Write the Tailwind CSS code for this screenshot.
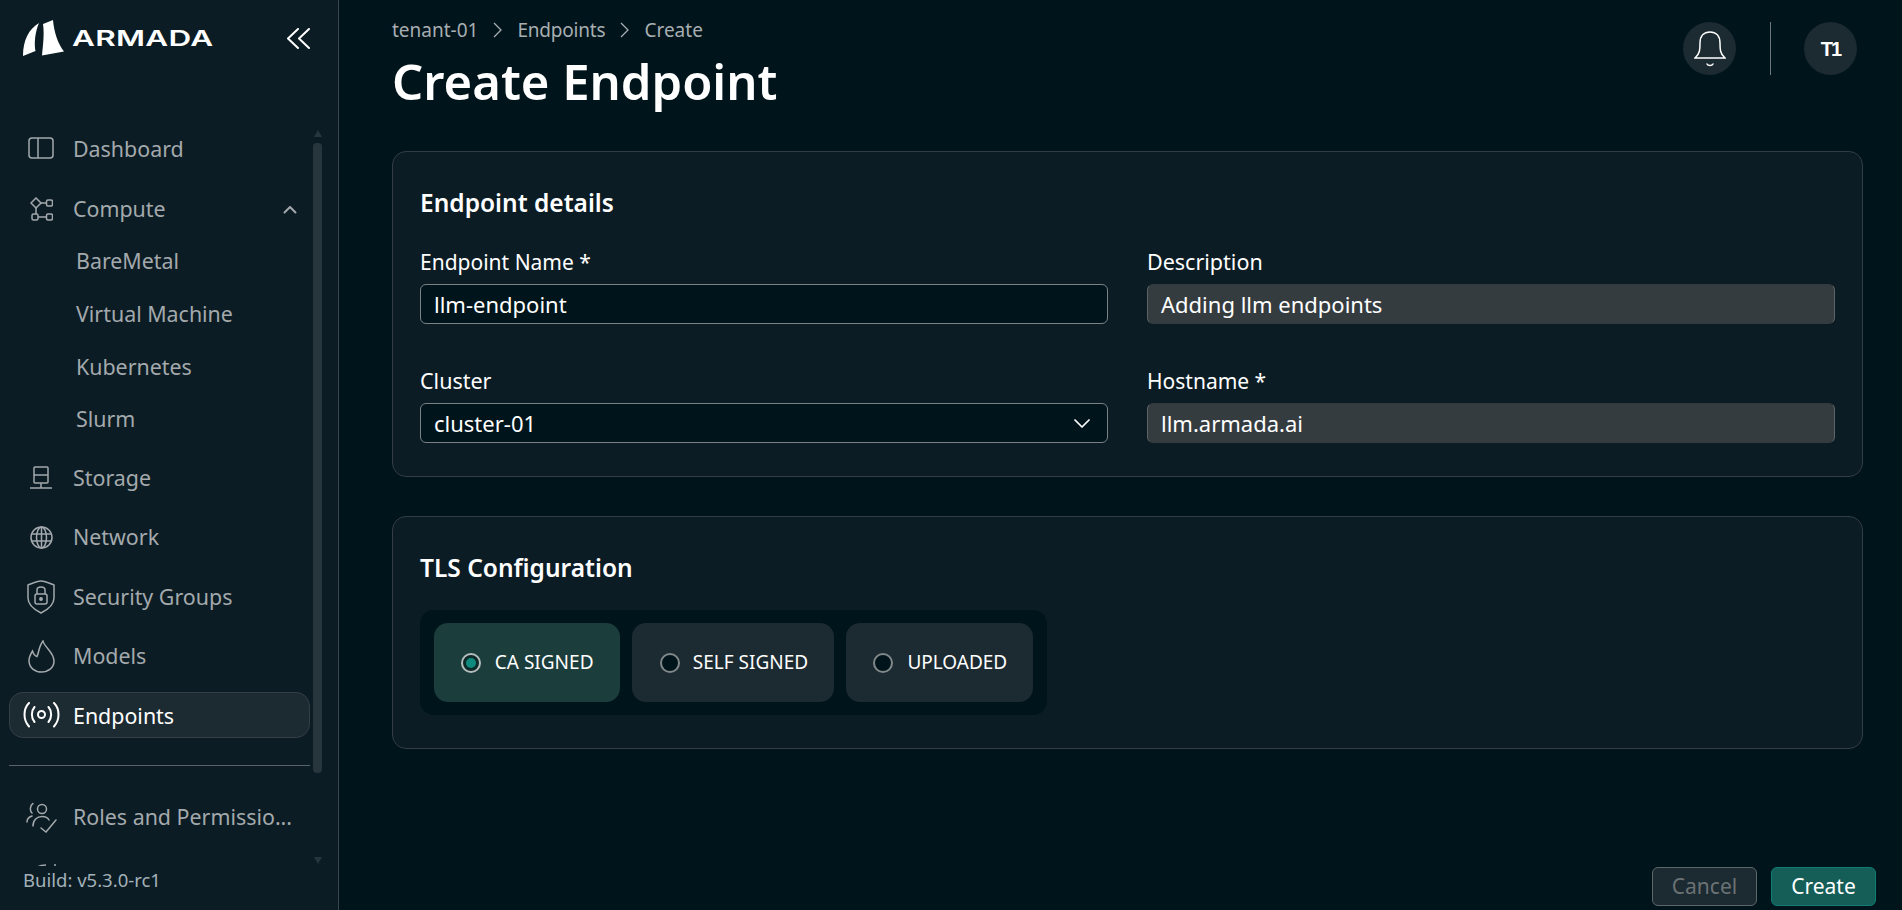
<!DOCTYPE html>
<html lang="en">
<head>
<meta charset="utf-8">
<title>Create Endpoint</title>
<script src="https://cdn.jsdelivr.net/npm/@tailwindcss/browser@4"></script>
</head>
<body class="bg-[#00141b]">
<div class="flex h-[910px] w-[1902px] overflow-hidden bg-[#00141b] font-['Noto_Sans',sans-serif] text-white">

  <!-- Sidebar -->
  <aside class="relative flex h-full w-[339px] shrink-0 flex-col border-r border-[#3a454b] bg-[#0b1c24]">
    <div class="flex h-[118px] shrink-0 items-start pl-[23px] pr-[28px] pt-[20px]">
      <svg class="shrink-0" width="42" height="36" viewBox="0 0 42 36" fill="#fff">
        <path d="M0 36C0 20 6 9 16 3C12 12 11 24 12.500 31Z"/>
        <path d="M20 4L30 0C31 12 35 24 41 31.500L19 35.500C20 25 21.500 14 20 4Z"/>
      </svg>
      <span class="ml-[7px] mt-[3px] origin-left scale-x-[1.43] font-['Inter',sans-serif] text-[22px] font-semibold leading-[30px] tracking-[0.2px]">ARMADA</span>
      <svg class="ml-auto mt-[8px] shrink-0" width="24" height="22" viewBox="0 0 24 22" fill="none" stroke="#fff" stroke-width="2" stroke-linecap="round" stroke-linejoin="round">
        <path d="M12 1L2 10.500L12 20"/><path d="M23 1L13 10.500L23 20"/>
      </svg>
    </div>

    <nav class="h-[748px] overflow-hidden text-[21.400px] text-[#a3a9ac]">
      <a class="flex h-[60px] items-center pl-[28px]">
        <svg class="w-[26px] shrink-0" width="26" height="22" viewBox="0 0 26 22" fill="none" stroke="#a3a9ac" stroke-width="1.500"><rect x="1" y="1" width="24" height="20" rx="3"/><path d="M10 1V21"/></svg>
        <span class="ml-[19px] pt-[2px]">Dashboard</span>
      </a>
      <a class="flex h-[62px] items-center pl-[30px] pr-[39px]">
        <svg class="shrink-0" width="23" height="24" viewBox="0 0 23 24" fill="none" stroke="#a3a9ac" stroke-width="1.500"><path d="M6 1L11 6L6 11L1 6Z"/><rect x="16.500" y="3" width="6" height="6" rx="1.500"/><rect x="2" y="17" width="6" height="6" rx="1.500"/><rect x="16.500" y="17" width="6" height="6" rx="1.500"/><path d="M11 6H16.500M6 11V17M8 20H16.500"/></svg>
        <span class="ml-[20px]">Compute</span>
        <svg class="ml-auto mr-[2px]" width="14" height="9" viewBox="0 0 14 9" fill="none" stroke="#a3a9ac" stroke-width="2" stroke-linecap="round" stroke-linejoin="round"><path d="M1.500 7.500L7 2L12.500 7.500"/></svg>
      </a>
      <a class="flex h-[42px] items-center pl-[76px]">BareMetal</a>
      <a class="flex h-[62px] items-center pl-[76px] pt-[2px]">Virtual Machine</a>
      <a class="flex h-[46px] items-center pl-[76px]">Kubernetes</a>
      <a class="flex h-[59px] items-center pl-[76px]">Slurm</a>
      <a class="flex h-[58px] items-center pl-[30px]">
        <svg class="shrink-0" width="22" height="24" viewBox="0 0 22 24" fill="none" stroke="#a3a9ac" stroke-width="1.500"><rect x="4" y="1" width="14" height="16" rx="1"/><path d="M4 9H18M11 17V22M0 22H22"/></svg>
        <span class="ml-[21px]">Storage</span>
      </a>
      <a class="flex h-[60px] items-center pl-[30px]">
        <svg class="shrink-0" width="23" height="23" viewBox="0 0 23 23" fill="none" stroke="#a3a9ac" stroke-width="1.500"><circle cx="11.500" cy="11.500" r="10.500"/><ellipse cx="11.500" cy="11.500" rx="5" ry="10.500"/><path d="M11.500 1V22M1.500 8H21.500M1.500 15H21.500"/></svg>
        <span class="ml-[20px]">Network</span>
      </a>
      <a class="flex h-[60px] items-center pl-[27px]">
        <svg class="shrink-0" width="28" height="34" viewBox="0 0 28 34" fill="none" stroke="#a3a9ac" stroke-width="1.500"><path d="M1 5C6 3 10 1 14 1C18 1 22 3 27 5V18C27 25 20 30 14 33C8 30 1 25 1 18Z"/><rect x="8" y="14" width="12" height="10" rx="2"/><path d="M10 14V10C10 6 18 6 18 10V14"/><circle cx="14" cy="19" r="1.200" fill="#a3a9ac"/></svg>
        <span class="ml-[18px]">Security Groups</span>
      </a>
      <a class="flex h-[59px] items-center pl-[28px]">
        <svg class="shrink-0" width="27" height="33" viewBox="0 0 27 33" fill="none" stroke="#a3a9ac" stroke-width="1.500"><path d="M15 1C16 7 26 12 26 21C26 28 20 32 13.500 32C7 32 1 28 1 20.500C1 17 3 13.500 4.500 11C5.500 14 7 16 9 16.500C11 12 11 6 15 1Z"/></svg>
        <span class="ml-[18px]">Models</span>
      </a>
      <a class="ml-[9px] mt-[6px] flex h-[46px] w-[301px] items-center rounded-[14px] border border-[#333f45] bg-[#1c2a31] pl-[13px] text-white">
        <svg class="shrink-0" width="37" height="26" viewBox="0 0 37 26" fill="none" stroke="#fff" stroke-width="2" stroke-linecap="round"><circle cx="18.500" cy="12.500" r="3.500"/><path d="M11.500 5C8 9 8 16 11.500 20M6 1C0 7 0 18 6 24.500M25.500 5C29 9 29 16 25.500 20M31 1C37 7 37 18 31 24.500"/></svg>
        <span class="ml-[13px] pt-[3px]">Endpoints</span>
      </a>
      <div class="ml-[9px] mt-[27px] h-px w-[301px] bg-[#5a6367]"></div>
      <a class="mt-[21px] flex h-[60px] items-center pl-[26px]">
        <svg class="shrink-0" width="31" height="31" viewBox="0 0 31 31" fill="none" stroke="#a3a9ac" stroke-width="1.500" stroke-linecap="round"><circle cx="16" cy="7" r="4.500"/><path d="M7 1.500C4 3 3.500 9 6 11M1 20C1 17 3 15 6 14M7 24C7 18 11 14.500 16 14.500C19 14.500 22 16 23 18M15 26L20 30L30 18"/></svg>
        <span class="ml-[16px]">Roles and Permissio...</span>
      </a>
      <a class="flex h-[30px] items-start pl-[34px] pt-[17px]">
        <svg class="shrink-0" width="24" height="14" viewBox="0 0 24 14" fill="none" stroke="#a3a9ac" stroke-width="1.500"><path d="M1 6C3 1 9 1 12 1M18 3H24M21 0V6"/></svg>
      </a>
    </nav>

    <div class="absolute left-[23px] top-[868px] text-[18.500px] leading-[24px] text-[#a3b1b8]">Build: v5.3.0-rc1</div>

    <!-- scrollbar overlay -->
    <div class="absolute left-[313px] top-[130px] flex h-[734px] w-[9px] flex-col items-center justify-between">
      <div class="h-0 w-0 border-x-[4.500px] border-b-[7px] border-x-transparent border-b-[#27363c]"></div>
      <div class="absolute top-[13px] h-[630px] w-[9px] rounded-[4px] bg-[#27363c]"></div>
      <div class="h-0 w-0 border-x-[4.500px] border-t-[7px] border-x-transparent border-t-[#27363c]"></div>
    </div>
  </aside>

  <!-- Main -->
  <main class="relative flex h-full min-w-0 flex-1 flex-col pl-[53px] pr-[39px]">
    <header class="flex h-[151px] shrink-0 items-start justify-between">
      <div>
        <div class="mt-[16px] flex h-[28px] items-center text-[19px] text-[#a8aeb1]">
          <span>tenant-01</span>
          <svg class="mx-[15px]" width="9" height="16" viewBox="0 0 9 16" fill="none" stroke="#a8aeb1" stroke-width="1.300"><path d="M1 1L8 8L1 15"/></svg>
          <span class="tracking-[-0.2px]">Endpoints</span>
          <svg class="mx-[15px]" width="9" height="16" viewBox="0 0 9 16" fill="none" stroke="#a8aeb1" stroke-width="1.300"><path d="M1 1L8 8L1 15"/></svg>
          <span>Create</span>
        </div>
        <h1 class="mt-[2px] text-[49px] font-semibold leading-[70px]">Create Endpoint</h1>
      </div>
      <div class="mr-[6px] mt-[22px] flex items-center">
        <div class="flex h-[53px] w-[53px] items-center justify-center rounded-full bg-[#1c2a31]">
          <svg width="32" height="36" viewBox="0 0 32 36" fill="none" stroke="#fff" stroke-width="1.500" stroke-linecap="round"><path d="M1 27C6 23 6 18 6 12C6 5 10 1 16 1C22 1 26 5 26 12C26 18 26 23 31 27Z"/><path d="M13 33C14 35 18 35 19 33"/></svg>
        </div>
        <div class="ml-[34px] mr-[33px] h-[53px] w-px bg-[#6f777b]"></div>
        <div class="flex h-[53px] w-[53px] items-center justify-center rounded-full bg-[#1c2a31] font-['Liberation_Sans',sans-serif] text-[20px] font-bold tracking-[-2px]">T1</div>
      </div>
    </header>

    <section class="h-[326px] shrink-0 rounded-[14px] border border-[#333d43] bg-[#0b1c24] px-[27px]">
      <h2 class="mt-[36px] h-[30px] text-[24.500px] font-semibold leading-[30px]">Endpoint details</h2>
      <div class="mt-[29px] grid grid-cols-2 gap-x-[39px] gap-y-[42px]">
        <label class="block">
          <span class="block h-[30px] text-[21px] leading-[30px]">Endpoint Name *</span>
          <div class="mt-[7px] flex h-[40px] items-center rounded-[6px] border border-[#7b8286] bg-[#00141b] px-[13px] text-[22px]">llm-endpoint</div>
        </label>
        <label class="block">
          <span class="block h-[30px] text-[21.500px] leading-[30px]">Description</span>
          <div class="mt-[7px] flex h-[40px] items-center rounded-[6px] border border-[#5c6366] border-t-[#33393c] border-b-[#33393c] bg-[#353c40] px-[13px] text-[22px]">Adding llm endpoints</div>
        </label>
        <label class="block">
          <span class="block h-[30px] text-[21.500px] leading-[30px]">Cluster</span>
          <div class="mt-[7px] flex h-[40px] items-center justify-between rounded-[6px] border border-[#7b8286] bg-[#00141b] pl-[13px] pr-[17px] text-[22px]">
            <span>cluster-01</span>
            <svg width="16" height="9" viewBox="0 0 16 9" fill="none" stroke="#fff" stroke-width="1.700" stroke-linecap="round" stroke-linejoin="round"><path d="M1 1L8 8L15 1"/></svg>
          </div>
        </label>
        <label class="block">
          <span class="block h-[30px] text-[21px] leading-[30px]">Hostname *</span>
          <div class="mt-[7px] flex h-[40px] items-center rounded-[6px] border border-[#5c6366] border-t-[#33393c] border-b-[#33393c] bg-[#353c40] px-[13px] text-[22px]">llm.armada.ai</div>
        </label>
      </div>
    </section>

    <section class="mt-[39px] h-[233px] shrink-0 rounded-[14px] border border-[#333d43] bg-[#0b1c24] px-[27px]">
      <h2 class="mt-[36px] h-[30px] text-[24.500px] font-semibold leading-[30px]">TLS Configuration</h2>
      <div class="mt-[27px] flex h-[105px] w-[627px] items-center gap-[12px] rounded-[14px] bg-[#00141b] px-[14px]">
        <div class="flex h-[79px] w-[187px] items-center justify-center rounded-[14px] bg-[#1b3d3b]">
          <span class="flex h-[20px] w-[20px] items-center justify-center rounded-full border-2 border-[#b5bcbc] bg-[#0d2a2b]"><span class="h-[10px] w-[10px] rounded-full bg-[#0f8a7c]"></span></span>
          <span class="ml-[14px] text-[19px]">CA SIGNED</span>
        </div>
        <div class="flex h-[79px] w-[202px] items-center justify-center rounded-[14px] bg-[#1c2a31] pl-[2px]">
          <span class="h-[20px] w-[20px] rounded-full border-2 border-[#81888a] bg-[#00141b]"></span>
          <span class="ml-[13px] text-[19px]">SELF SIGNED</span>
        </div>
        <div class="flex h-[79px] w-[188px] items-center justify-center rounded-[14px] bg-[#1c2a31] pl-[2px]">
          <span class="h-[20px] w-[20px] rounded-full border-2 border-[#81888a] bg-[#00141b]"></span>
          <span class="ml-[14px] text-[19px]">UPLOADED</span>
        </div>
      </div>
    </section>

    <footer class="-mr-[13px] mt-auto mb-[4px] flex justify-end gap-[14px]">
      <button class="h-[39px] w-[105px] rounded-[6px] border border-[#5d6669] bg-[#1c2a31] text-[21px] text-[#6a7275]">Cancel</button>
      <button class="h-[39px] w-[105px] rounded-[6px] border border-[#0e7d72] bg-[#155e58] text-[21px] text-white">Create</button>
    </footer>
  </main>
</div>
</body>
</html>
